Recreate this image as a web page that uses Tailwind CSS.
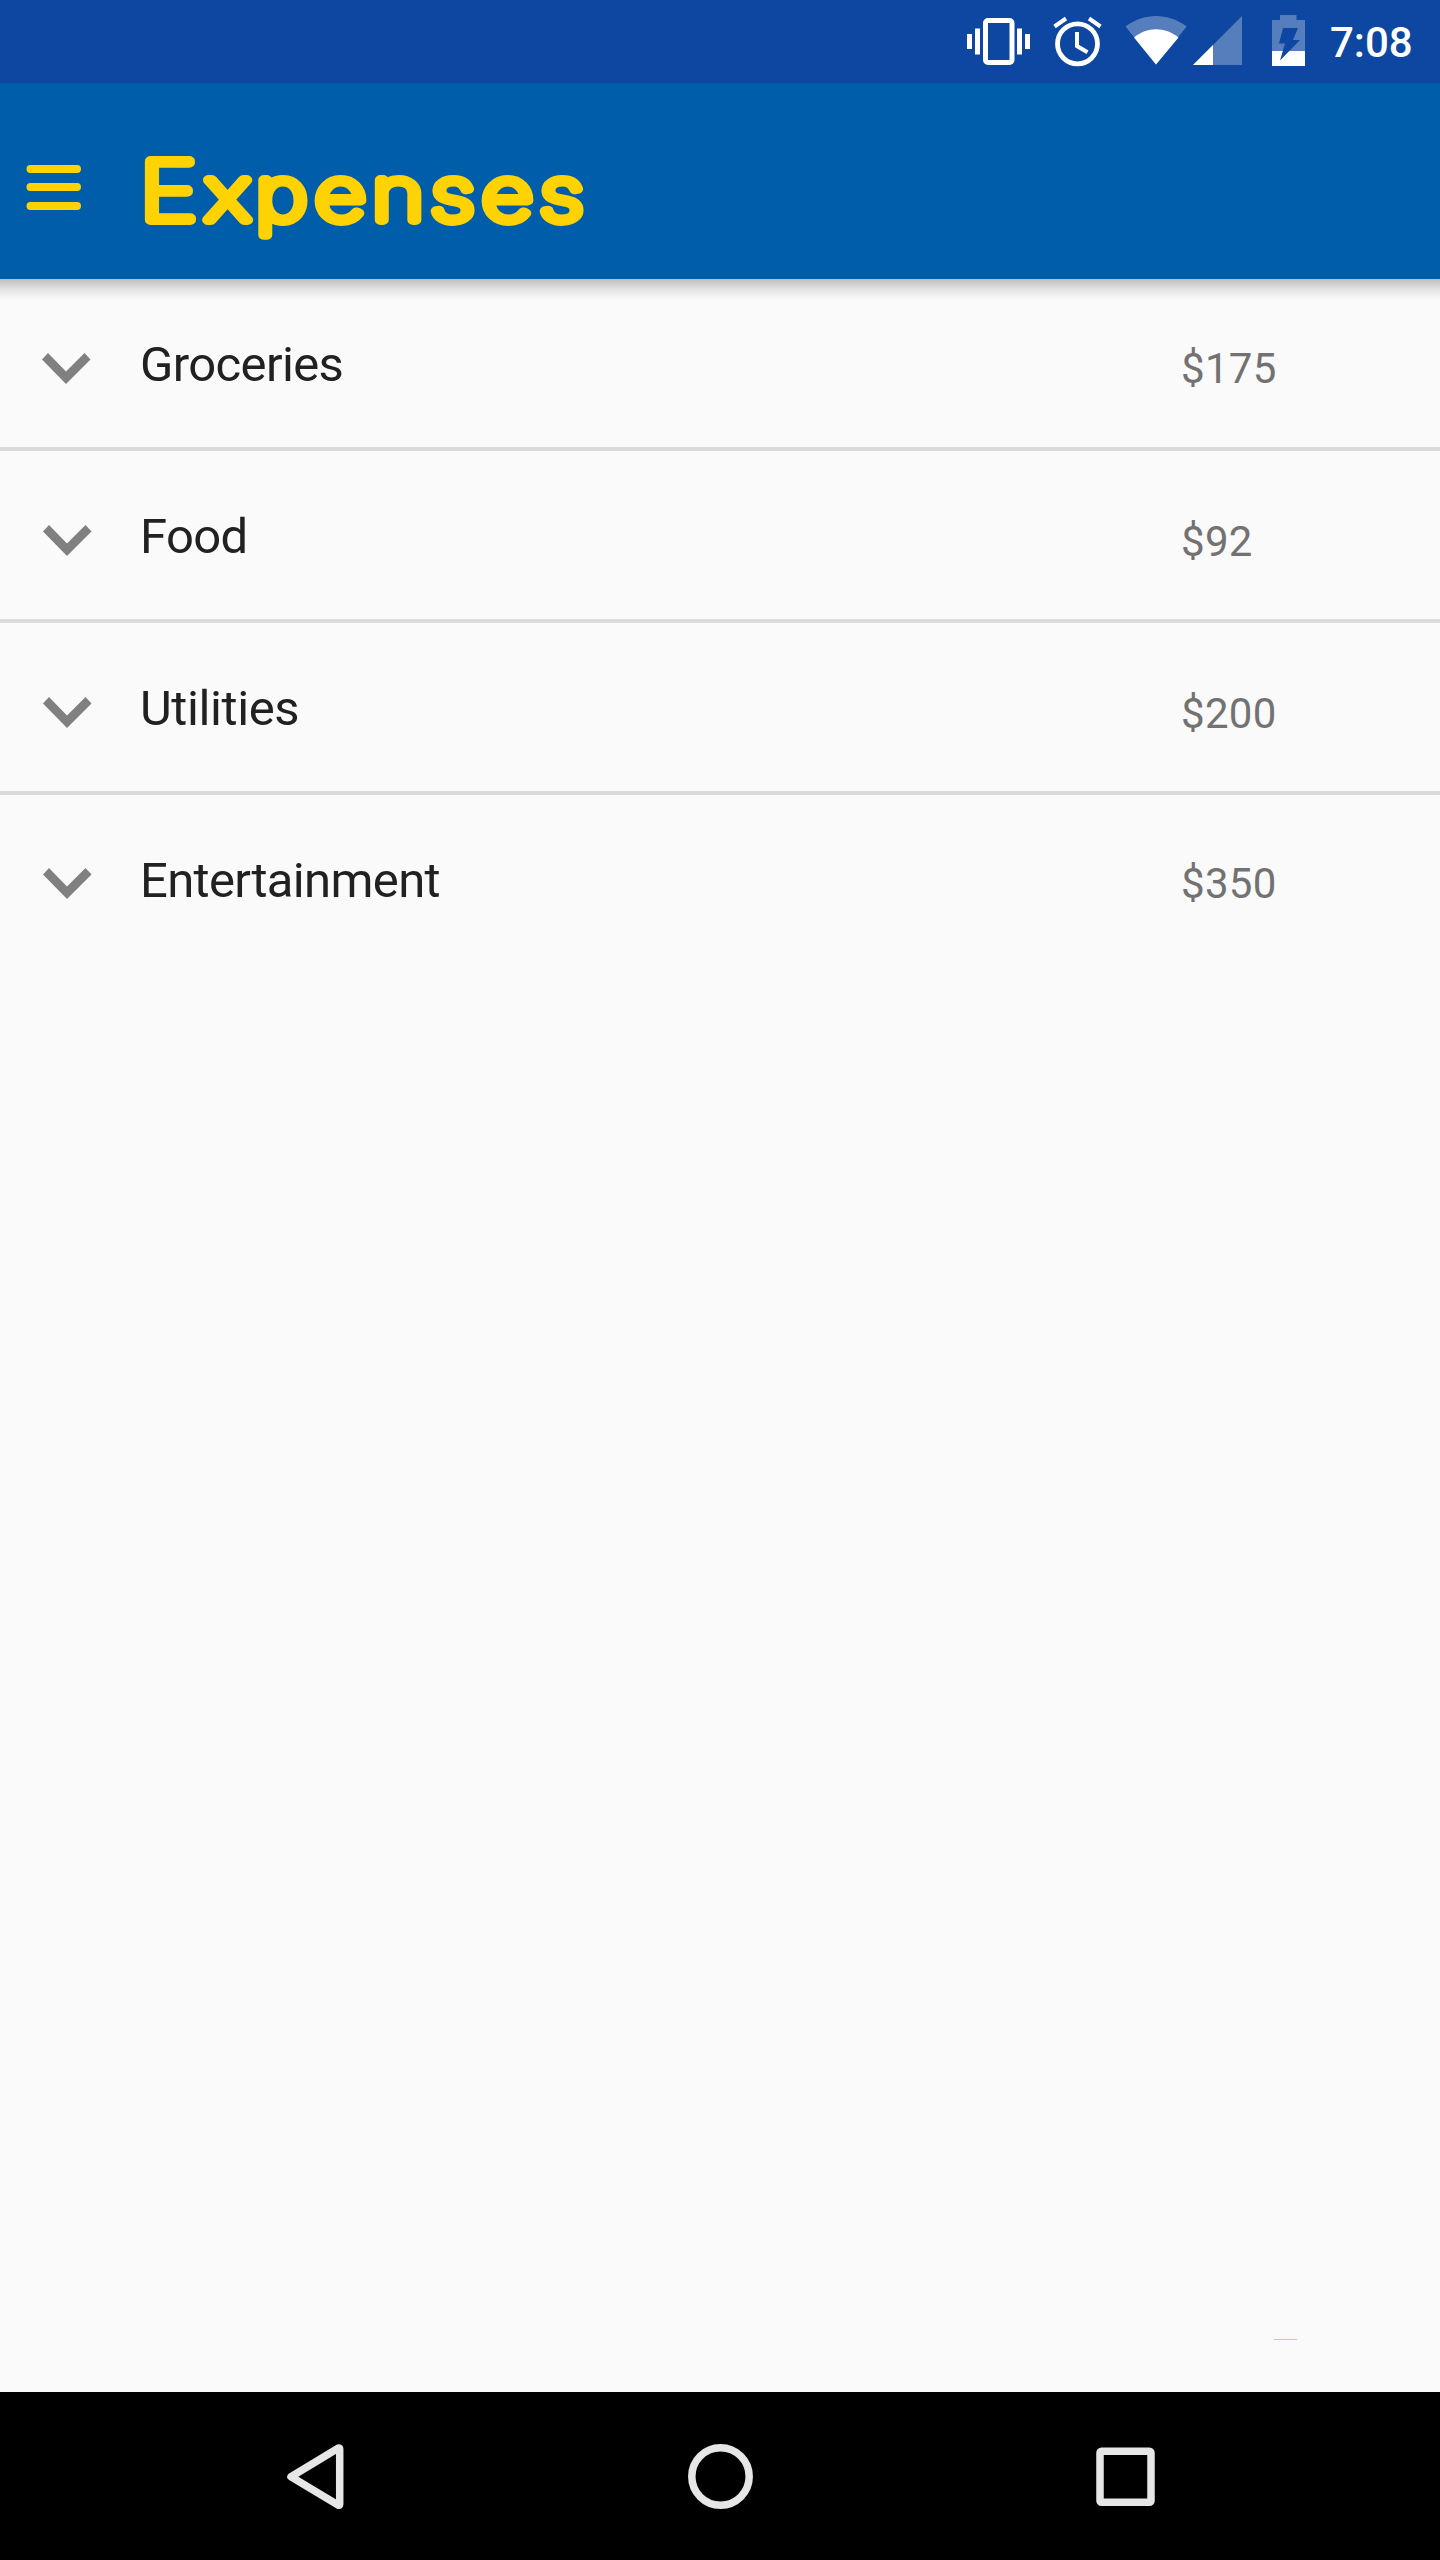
<!DOCTYPE html>
<html lang="en">
<head>
<meta charset="utf-8">
<title>Expenses</title>
<script src="https://cdn.jsdelivr.net/npm/@tailwindcss/browser@4"></script>
</head>
<body class="bg-[#fafafa]">
<div class="flex h-[2560px] w-[1440px] flex-col overflow-hidden bg-[#fafafa] font-['Roboto',sans-serif]">
  <!-- status bar -->
  <header class="flex h-[83px] shrink-0 bg-[#0d47a1] pl-[960px] text-white">
    <svg class="h-[83px] w-[360px] shrink-0" viewBox="960 0 360 83" fill="white">
      <rect x="985.5" y="20.5" width="26.500" height="42" rx="2.500" fill="none" stroke="white" stroke-width="5"/>
      <path d="M967 34h5v15h-5zM975 28.500h5v26h-5zM1017 28.500h5v26h-5zM1025 34h5v15h-5z"/>
      <circle cx="1077.500" cy="43.800" r="20" fill="none" stroke="white" stroke-width="4.800"/>
      <path d="M1077 32v14l10.500 6.200M1054.500 26.500l11.500-8M1100.500 26.500l-11.500-8" fill="none" stroke="white" stroke-width="4"/>
      <path d="M1125.500 26.500C1144 12.500 1168 12.500 1186.700 26.500L1156 64.500z" opacity=".3"/>
      <path d="M1134 37.500C1147 26.500 1165 26.500 1178.500 37.500L1156 64.500z"/>
      <path d="M1193 65L1242 16v49z" opacity=".3"/><path d="M1193 65l20-20v20z"/>
      <path d="M1280 15h16.500v5h8.500v31h-33v-31h8z" opacity=".3"/><path d="M1272 51h33v15h-33z"/>
      <path d="M1283 28h15l-5 12h7l-20 20.500 5-17h-6z" fill="#0d47a1"/>
    </svg>
    <span class="pl-[10px] pt-px text-[42px] leading-[83px] font-medium">7:08</span>
  </header>
  <!-- app bar -->
  <div class="relative flex h-[196px] shrink-0 items-center bg-[#005daa]">
    <svg class="h-[196px] w-[640px]" viewBox="0 83 640 196">
      <path d="M30.500 169h46.500M30.500 187h46.500M30.500 206h46.500" stroke="#ffd204" stroke-width="8" stroke-linecap="round"/>
      <text transform="scale(1.22 1)" x="114.600 168.400 209.700 258.200 305.200 353.100 395.100 442.500" y="219.800" fill="#ffd204" stroke="#ffd204" stroke-width="9.800" stroke-linejoin="round" class="font-['Inter'] text-[72.5px] font-thin"><tspan class="text-[80.5px]">E</tspan>xpenses</text>
    </svg>
    <div class="absolute inset-x-0 top-full h-[21px] bg-linear-to-b from-black/24 via-black/9 to-transparent"></div>
  </div>
  <!-- expense list -->
  <main class="flex grow flex-col text-[#212121]">
    <div class="flex h-[172px] border-b-4 border-[#dadbda]">
      <svg class="mt-[74px] ml-[42px] h-[31px] w-[49px] shrink-0" viewBox="0 0 49 31" fill="#808080"><path d="M0 6.500L6 0 24 18.500 42.500 0 48.500 6.500 24 31z"/></svg>
      <span class="w-[1040px] pt-[2px] pl-[49px] text-[49px] leading-[168px] tracking-[-0.62px]">Groceries</span>
      <span class="pt-[6px] pl-[50px] text-[42px] leading-[168px] tracking-[0.3px] text-[#727272]">$175</span>
    </div>
    <div class="flex h-[172px] border-b-4 border-[#dadbda]">
      <svg class="mt-[74px] mr-[-1px] ml-[43px] h-[31px] w-[49px] shrink-0" viewBox="0 0 49 31" fill="#808080"><path d="M0 6.500L6 0 24 18.500 42.500 0 48.500 6.500 24 31z"/></svg>
      <span class="w-[1040px] pt-[2px] pl-[49px] text-[49px] leading-[168px] tracking-[-0.62px]">Food</span>
      <span class="pt-[7px] pl-[50px] text-[42px] leading-[168px] tracking-[0.3px] text-[#727272]">$92</span>
    </div>
    <div class="flex h-[172px] border-b-4 border-[#dadbda]">
      <svg class="mt-[74px] mr-[-1px] ml-[43px] h-[31px] w-[49px] shrink-0" viewBox="0 0 49 31" fill="#808080"><path d="M0 6.500L6 0 24 18.500 42.500 0 48.500 6.500 24 31z"/></svg>
      <span class="w-[1040px] pt-[2px] pl-[49px] text-[49px] leading-[168px] tracking-[-0.4px]">Utilities</span>
      <span class="pt-[7px] pl-[50px] text-[42px] leading-[168px] tracking-[0.3px] text-[#727272]">$200</span>
    </div>
    <div class="flex h-[172px]">
      <svg class="mt-[73px] mr-[-1px] ml-[43px] h-[31px] w-[49px] shrink-0" viewBox="0 0 49 31" fill="#808080"><path d="M0 6.500L6 0 24 18.500 42.500 0 48.500 6.500 24 31z"/></svg>
      <span class="w-[1040px] pt-[2px] pl-[49px] text-[49px] leading-[168px] tracking-[-0.65px]">Entertainment</span>
      <span class="pt-[5px] pl-[50px] text-[42px] leading-[168px] tracking-[0.3px] text-[#727272]">$350</span>
    </div>
    <div class="mt-auto mb-[52px] ml-[1274px] h-px w-[23px] bg-[#ffd204]"></div>
  </main>
  <!-- navigation bar -->
  <nav class="h-[168px] shrink-0 bg-black">
    <svg class="h-[168px] w-[1440px]" viewBox="0 2392 1440 168" fill="none" stroke="#e6e6e6" stroke-width="7.500">
      <path d="M291 2476.700L338.500 2448q1.200 0 1.200 1v55q0 1.200-1.200 1.200z" stroke-linejoin="round"/>
      <circle cx="720.500" cy="2476.500" r="28.700"/>
      <rect x="1100" y="2451.300" width="51" height="51" rx="1.500"/>
    </svg>
  </nav>
</div>
</body>
</html>
